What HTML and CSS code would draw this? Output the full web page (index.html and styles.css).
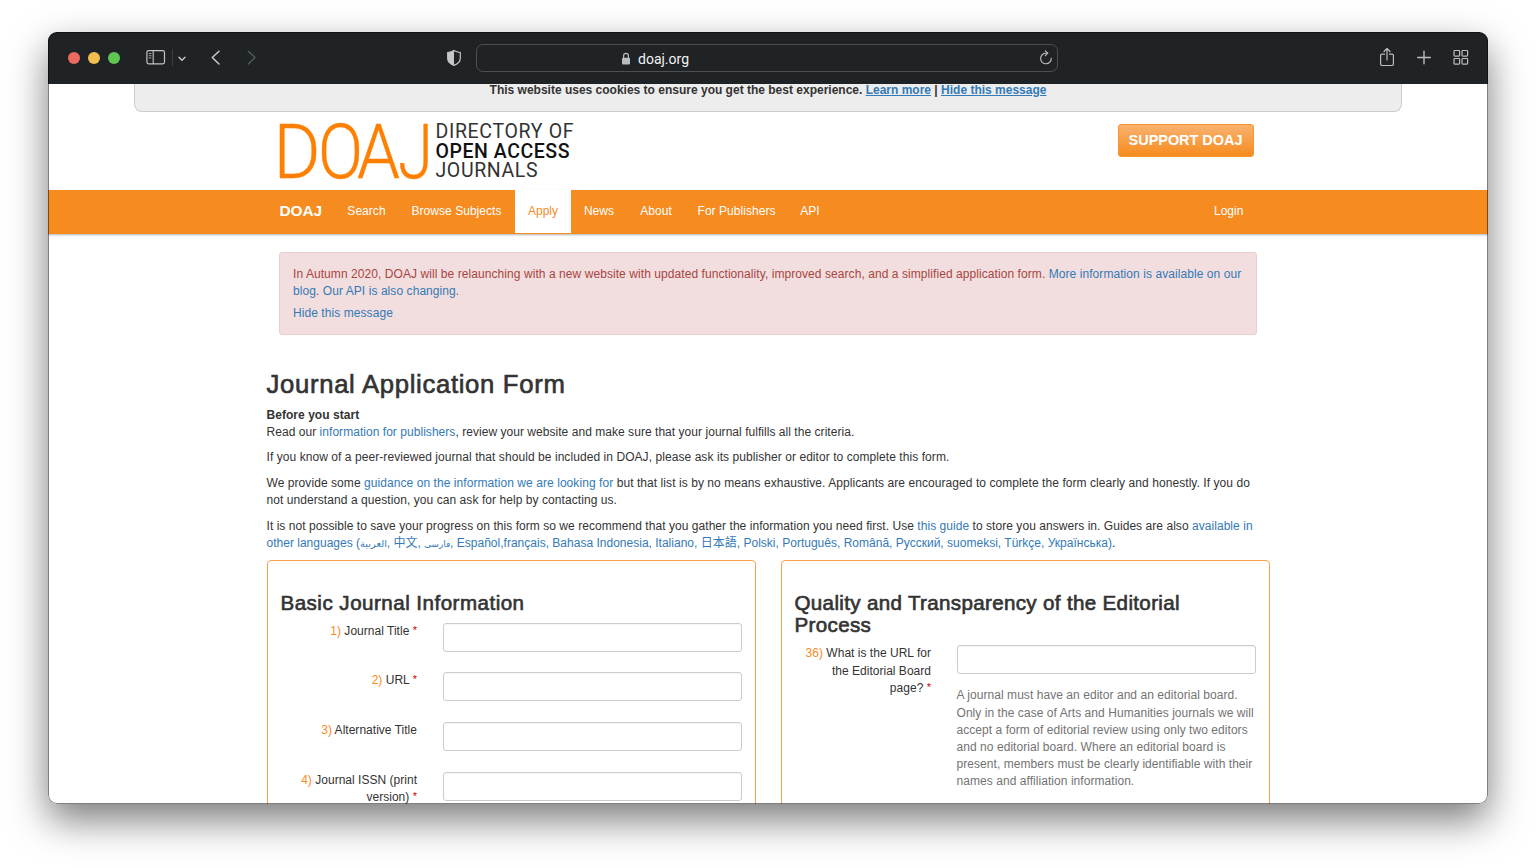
FILE: index.html
```html
<!DOCTYPE html>
<html lang="en">
<head>
<meta charset="utf-8">
<title>Journal Application Form - DOAJ</title>
<link rel="stylesheet" href="styles.css">
</head>
<body>
<div class="window">
  <div class="toolbar">
    <div class="lights"><i class="red"></i><i class="yellow"></i><i class="green"></i></div>
    <svg class="tools-left" width="140" height="24" viewBox="0 0 140 24" fill="none">
      <rect x="0.9" y="4.7" width="17.6" height="13.2" rx="1.8" stroke="#c3c4c5" stroke-width="1.2"/>
      <path d="M7.2 4.7v13.2" stroke="#c3c4c5" stroke-width="1.1"/>
      <path d="M2.8 7.5h2.6M2.8 9.7h2.6M2.8 11.9h2.6" stroke="#a0a2a3" stroke-width="1"/>
      <path d="M26.5 3v17" stroke="#3b3f41"/>
      <path d="M33 11.300l3 3 3-3" stroke="#c3c4c5" stroke-width="1.5" stroke-linecap="round" stroke-linejoin="round"/>
      <path d="M73 5.2l-6.7 6.4 6.7 6.4" stroke="#d0d1d1" stroke-width="1.4" stroke-linecap="round" stroke-linejoin="round"/>
      <path d="M102.300 5.2l6.7 6.4-6.7 6.4" stroke="#555a5c" stroke-width="1.4" stroke-linecap="round" stroke-linejoin="round"/>
    </svg>
    <svg class="shield" width="16" height="18" viewBox="0 0 16 18">
      <path d="M8 1.6C6.400 2.700 4 3.300 1.700 3.500V9.500C1.700 13 4.500 14.900 8 16.400C11.500 14.900 14.300 13 14.300 9.500V3.500C12 3.300 9.600 2.700 8 1.600Z" fill="none" stroke="#c6c7c8" stroke-width="1.2"/>
      <path d="M8 1.600C6.400 2.700 4 3.300 1.700 3.500V9.500C1.700 13 4.500 14.900 8 16.400Z" fill="#c6c7c8"/>
    </svg>
    <div class="address">
      <svg class="lock" width="10" height="14" viewBox="0 0 10 14"><rect x="1" y="5.800" width="8" height="6.700" rx="1" fill="#b9bbbc"/><path d="M2.600 6V3.700a2.400 2.400 0 0 1 4.800 0V6" fill="none" stroke="#b9bbbc" stroke-width="1.200"/></svg>
      <span>doaj.org</span>
      <svg class="reload" width="14" height="16" viewBox="0 0 14 16" fill="none" stroke="#b9bbbc" stroke-width="1.150" stroke-linecap="round" stroke-linejoin="round"><path d="M12.200 8.200A5.300 5.300 0 1 1 7 3.200h1.600"/><path d="M6.300 .8l2.500 2.400-2.500 2.500"/></svg>
    </div>
    <svg class="tools-right" width="92" height="24" viewBox="0 0 92 24" fill="none" stroke="#bcbebf" stroke-width="1.200" stroke-linecap="round" stroke-linejoin="round">
      <path d="M5.500 8.200H2.900Q1.600 8.200 1.600 9.500V18.100Q1.600 19.500 2.900 19.500H13.100Q14.400 19.500 14.400 18.100V9.500Q14.400 8.200 13.100 8.200H10.500"/>
      <path d="M8 14V2.700M5 5.500l3-3 3 3"/>
      <path d="M45 5.300v12.500M38.700 11.500h12.600" stroke-width="1.400"/>
      <rect x="75" y="4.500" width="5.600" height="5.600" rx=".8"/><rect x="83" y="4.500" width="5.600" height="5.600" rx=".8"/>
      <rect x="75" y="12.500" width="5.600" height="5.600" rx=".8"/><rect x="83" y="12.500" width="5.600" height="5.600" rx=".8"/>
    </svg>
  </div>

  <div class="page">
    <div class="cookies">This website uses cookies to ensure you get the best experience. <a>Learn more</a> | <a>Hide this message</a></div>

    <header class="masthead">
      <svg class="logo" width="300" height="62" viewBox="0 0 300 62">
        <g class="logo-mark">
          <text x="-6.500" y="55.500" textLength="47" lengthAdjust="spacingAndGlyphs">D</text>
          <text x="38" y="55.500" textLength="45" lengthAdjust="spacingAndGlyphs">O</text>
          <text x="77" y="55.500" textLength="43" lengthAdjust="spacingAndGlyphs">A</text>
          <text x="118" y="55.500" textLength="35" lengthAdjust="spacingAndGlyphs">J</text>
        </g>
        <g class="logo-words">
          <text x="155.500" y="16.300" textLength="138">DIRECTORY OF</text>
          <text class="strong" x="155.500" y="35.500" textLength="134">OPEN ACCESS</text>
          <text x="155.500" y="55" textLength="102">JOURNALS</text>
        </g>
      </svg>
      <a class="support">SUPPORT DOAJ</a>
    </header>

    <nav class="nav">
      <div class="nav-inner">
        <a class="brand">DOAJ</a><a>Search</a><a>Browse Subjects</a><a class="active">Apply</a><a>News</a><a>About</a><a>For Publishers</a><a>API</a><a class="login">Login</a>
      </div>
    </nav>

    <div class="alert">
      <p>In Autumn 2020, DOAJ will be relaunching with a new website with updated functionality, improved search, and a simplified application form. <a>More information is available on our<br>blog</a>. <a>Our API is also changing</a>.</p>
      <p><a>Hide this message</a></p>
    </div>

    <main class="content">
      <h1>Journal Application Form</h1>
      <p class="intro"><b>Before you start</b><br>Read our <a>information for publishers</a>, review your website and make sure that your journal fulfills all the criteria.</p>
      <p>If you know of a peer-reviewed journal that should be included in DOAJ, please ask its publisher or editor to complete this form.</p>
      <p>We provide some <a>guidance on the information we are looking for</a> but that list is by no means exhaustive. Applicants are encouraged to complete the form clearly and honestly. If you do<br>not understand a question, you can ask for help by contacting us.</p>
      <p class="guides">It is not possible to save your progress on this form so we recommend that you gather the information you need first. Use <a>this guide</a> to store you answers in. Guides are also <a>available in<br><span class="languages">other languages (<bdi class="arabic">العربية</bdi>, 中文, <bdi class="arabic farsi">فارسی</bdi>, Español,français, Bahasa Indonesia, Italiano, 日本語, Polski, Português, Română, Русский, suomeksi, Türkçe, Українська)</span></a>.</p>

      <div class="columns">
        <section class="panel">
          <h2 class="wide">Basic Journal Information</h2>
          <div class="field"><label><em>1)</em> Journal Title <sup>*</sup></label><div><input type="text"></div></div>
          <div class="field"><label><em>2)</em> URL <sup>*</sup></label><div><input type="text"></div></div>
          <div class="field"><label><em>3)</em> Alternative Title</label><div><input type="text"></div></div>
          <div class="field"><label><em>4)</em> Journal ISSN (print<br>version) <sup>*</sup></label><div><input type="text"></div></div>
        </section>
        <section class="panel">
          <h2>Quality and Transparency of the Editorial<br>Process</h2>
          <div class="field"><label><em>36)</em> What is the URL for<br>the Editorial Board<br>page? <sup>*</sup></label>
            <div><input type="text"><p class="help">A journal must have an editor and an editorial board.<br>Only in the case of Arts and Humanities journals we will<br>accept a form of editorial review using only two editors<br>and no editorial board. Where an editorial board is<br>present, members must be clearly identifiable with their<br>names and affiliation information.</p></div>
          </div>
        </section>
      </div>
    </main>
  </div>
</div>
</body>
</html>
```
FILE: styles.css
```css
* { box-sizing: border-box; }
body { margin: 0; height: 868px; padding: 32px 48px 0; background: #fff; overflow: hidden; }
.window {
  position: relative;
  display: flex; flex-direction: column;
  width: 1440px; height: 772px;
  border-radius: 9px; overflow: hidden;
  background: #fff;
  box-shadow: 0 16px 38px rgba(0,0,0,.52);
}
.window::after {
  content: ""; position: absolute; inset: 0; border-radius: 9px;
  box-shadow: inset 0 0 0 1px rgba(0,0,0,.5); pointer-events: none;
}
.toolbar { flex: none; display: flex; align-items: center; height: 52px; background: #1f2326; }
.lights { display: flex; gap: 8px; margin-left: 20px; }
.lights i { width: 12px; height: 12px; border-radius: 50%; }
.red { background: #ed6a5e; }
.yellow { background: #f4be4f; }
.green { background: #61c554; }
.tools-left { margin-left: 26px; }
.shield { margin-left: 160px; }
.address {
  display: flex; align-items: center;
  width: 582px; height: 28px; margin-left: 14px;
  border: 1px solid #4b4f51; border-radius: 7px;
  color: #f2f2f2; font: 14px/26px Roboto, sans-serif;
}
.address span { margin-left: 7px; padding-top: 1px; width: 52px; letter-spacing: 0; white-space: nowrap; }
.lock { margin-left: 144px; margin-top: 1px; }
.reload { margin-left: auto; margin-right: 4.500px; }
.tools-right { margin-left: auto; margin-right: 17px; }

.page {
  flex: 1; min-height: 0; overflow: hidden;
  color: #333; font: 12px/17.143px "Liberation Sans", "Noto Sans CJK SC", sans-serif;
  white-space: nowrap;
}
.page a { color: #337ab7; }
.cookies {
  width: 1268px; height: 28px; margin: 0 auto;
  background: #ededed; border: 1px solid #ccc; border-top: 0; border-radius: 0 0 8px 8px;
  text-align: center; font-weight: bold; line-height: 12px;
}
.cookies a { text-decoration: underline; }
.masthead {
  display: flex; justify-content: space-between; align-items: flex-start;
  height: 78px; width: 975px; margin: 0 auto;
}
.logo { margin-top: 10px; margin-left: -1px; overflow: visible; }
.logo-mark { font: 300 75.500px Roboto, sans-serif; fill: #ff7f00; stroke: #ff7f00; stroke-width: .4px; }
.logo-words { font: 400 19.500px Roboto, sans-serif; fill: #333; }
.logo-words .strong { font-weight: 500; fill: #111; }
.page .support {
  width: 136px; height: 33px; margin-top: 12px; margin-right: 2px;
  border: 1px solid #f7942f; border-radius: 3px;
  background: linear-gradient(#f9b26f, #f68b1f);
  color: #fff; font-weight: bold; font-size: 14.500px; letter-spacing: -.05px; line-height: 30px; text-align: center;
}
.nav { height: 43.500px; background: #f68b1f; box-shadow: 0 1px 2px rgba(0,0,0,.3); }
.nav-inner {
  display: grid; grid-template-columns: 55.500px 63px 117px 56px 56px 58px 103px 44px 1fr;
  width: 977px; margin: 0 auto; line-height: 43.500px; text-align: center; letter-spacing: .04px;
}
.page .nav a { color: #fff; }
.page .nav .brand { font-weight: bold; font-size: 15.400px; line-height: 42px; text-align: left; letter-spacing: -.1px; }
.page .nav .active { background: #fff; color: #f68b1f; height: 42.500px; }
.nav .login { text-align: right; padding-right: 13px; }

.alert {
  width: 978px; height: 83px; margin: 18px auto 0; padding: 13px 13px 0;
  background: #f2dede; border: 1px solid #ebccd1; border-radius: 3px; color: #a94442;
  letter-spacing: .068px;
}
.alert p { margin: 0 0 4.800px; }
.content { width: 1003px; margin: 35.500px auto 0; letter-spacing: .066px; }
h1, h2 { font-weight: 400; -webkit-text-stroke: .65px #333; line-height: 1.1; margin: 0; }
h1 { font-size: 25.700px; margin-bottom: 8.300px; letter-spacing: .68px; }
.content > p { margin: 0 0 8.570px; }
.content > .intro { letter-spacing: .042px; }
.content > .guides { letter-spacing: .048px; margin-bottom: 7.700px; }
.languages { letter-spacing: .01px; }
.arabic { font-family: "DejaVu Sans", sans-serif; font-size: 9.800px; line-height: 1; letter-spacing: 0; }
.farsi { font-size: 8.800px; }
.columns { display: grid; grid-template-columns: 489px 489px; justify-content: space-between; }
.panel {
  height: 400px; padding: 30.700px 13px 0; border: 1px solid #f7a04a; border-radius: 4px;
}
h2 { font-size: 20.570px; line-height: 22.630px; margin-bottom: 8.500px; letter-spacing: .34px; }
h2.wide { letter-spacing: .48px; }
.field { display: grid; grid-template-columns: 136.500px 299px; justify-content: space-between; min-height: 49.700px; }
label { text-align: right; letter-spacing: .02px; }
em { font-style: normal; color: #f68b1f; }
sup { color: #c00; font-size: 11px; line-height: 0; vertical-align: 1px; }
input { display: block; width: 299px; height: 29px; border: 1px solid #ccc; border-radius: 3px; background: #fff; box-shadow: inset 0 1px 1px rgba(0,0,0,.04); }
.help { margin: 13px 0 0; color: #737373; letter-spacing: .055px; }
```
